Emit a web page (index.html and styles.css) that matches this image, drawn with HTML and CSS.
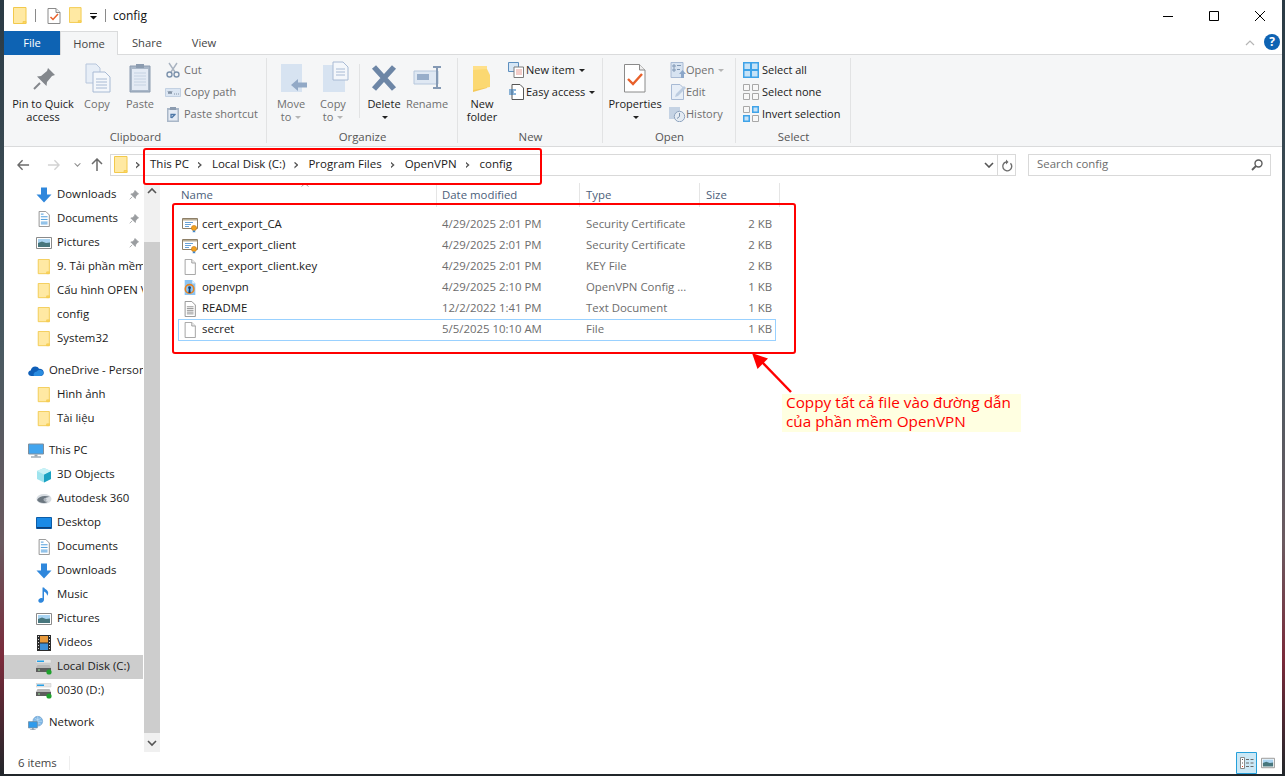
FILE: index.html
```html
<!DOCTYPE html>
<html lang="en">
<head>
<meta charset="utf-8">
<title>config</title>
<link rel="stylesheet" href="styles.css">
</head>
<body>
<svg class="defs" aria-hidden="true">
  <symbol id="folder" viewBox="0 0 14 18"><path d="M.5.5h12.500v16H.5z" fill="#ffe9a3" stroke="#f2c94c"/><path d="M10 14.500h3v2h-3z" fill="#ffd75e" stroke="#f2c94c" stroke-width=".8"/></symbol>
  <symbol id="doc" viewBox="0 0 14 18"><path d="M1.500.5H9l4 4v13H1.500z" fill="#fff" stroke="#9a9a9a"/><path d="M9 .5v4h4" fill="#eee" stroke="#9a9a9a"/></symbol>
  <symbol id="txt" viewBox="0 0 14 18"><path d="M1.500.5H9l4 4v13H1.500z" fill="#fff" stroke="#8a8a8a"/><path d="M3.500 6.500h7.500M3.500 8.500h7.500M3.500 10.500h7.500M3.500 12.500h7.500M3.500 14.500h7.500" stroke="#8a8a8a"/></symbol>
  <symbol id="docblue" viewBox="0 0 14 18"><path d="M1.500.5H9l4 4v13H1.500z" fill="#fff" stroke="#8a8a8a"/><path d="M3.500 3.500h3M3.500 6.500h7.500M3.500 9.500h7.500M3.500 12.500h7.500M3.500 14.500h7.500" stroke="#3a92d8"/></symbol>
  <symbol id="cert" viewBox="0 0 16 16"><path d="M.5 1.500h15v10H.5z" fill="#fff" stroke="#8d7f68"/><path d="M1 2h14v1.500H1z" fill="#b9ad95"/><path d="M3 5.500h8M3 7.500h6M3 9.500h4" stroke="#6aa2d6"/><circle cx="12" cy="11" r="2.600" fill="#f0a020" stroke="#c67a10" stroke-width=".6"/><path d="M10.800 13.500v2l1.200-.6 1.200.6v-2" fill="#3f86c9"/></symbol>
  <symbol id="vpn" viewBox="0 0 14 18"><path d="M1 0h8.500L13 4v13H1z" fill="#8cc4f2"/><path d="M9.500 0v4H13" fill="#e8f3fc"/><circle cx="6.500" cy="10" r="4.800" fill="none" stroke="#e8821e" stroke-width="1.800"/><circle cx="6.500" cy="8.700" r="1.600" fill="#17406e"/><path d="M5.700 9.500h1.600l.5 5H5.200z" fill="#17406e"/></symbol>
  <symbol id="dl" viewBox="0 0 16 16"><path d="M5 .5h6v7h4.500L8 15.500.5 7.500H5z" fill="#2f87dc"/></symbol>
  <symbol id="pic" viewBox="0 0 16 14"><path d="M.5 1.500h15v11H.5z" fill="#fff" stroke="#8a8a8a"/><path d="M2 3h12v4H2z" fill="#a9d4f2"/><path d="M2 7l4-1.500 4 1.500 4-.5V11H2z" fill="#47767d"/></symbol>
  <symbol id="pinicon" viewBox="0 0 10 10"><path d="M6 .5l3.500 3.500-1.200.6-1.700 2.200-.3 1.700L1.800 4l1.700-.3 2-1.700zM3.200 6.800L.7 9.300" fill="#9a9da0" stroke="#9a9da0" stroke-width=".8"/></symbol>
  <symbol id="cloud" viewBox="0 0 16 11"><path d="M3.500 10.500C1.500 10.500.2 9.300.2 7.700c0-1.500 1-2.600 2.500-2.800C3.300 2.600 5 1 7.200 1c1.700 0 3.100.9 3.800 2.300 2.500-.3 4.700 1.300 4.800 3.800.1 2-1.200 3.400-3.300 3.400z" fill="#0f5fb8"/><path d="M6 10.500c-1-1.800.2-4.300 2.800-4.500 1.400-1.700 4.700-2 6 .1.900 1.800-.3 4.400-2.500 4.400z" fill="#2a8ce0"/></symbol>
  <symbol id="pc" viewBox="0 0 16 15"><path d="M.5.500h15v10H.5z" fill="#42a5ee" stroke="#7e8f9e"/><path d="M6.500 11h3v2h-3z" fill="#9aa6b0"/><path d="M3 13.500h10" stroke="#9aa6b0" stroke-width="1.400"/></symbol>
  <symbol id="cube" viewBox="0 0 16 16"><path d="M8 1l7 3v8l-7 3.500L1 12V4z" fill="#9fe4ee"/><path d="M8 7.500V15.500L15 12V4z" fill="#1ba2c2"/><path d="M1 4l7 3.500L15 4 8 1z" fill="#c9f2f6"/></symbol>
  <symbol id="adsk" viewBox="0 0 16 12"><ellipse cx="8" cy="6" rx="7.500" ry="5" fill="#d8dde2"/><path d="M1 7c2-4 8-5 13-3-3 0-6 1-6 3 0 1.500 2 2 4 1.500-3 2.500-9 2-11-1.500z" fill="#6c7780"/><circle cx="9" cy="6.500" r="1.500" fill="#aab2ba"/></symbol>
  <symbol id="desk" viewBox="0 0 16 12"><path d="M.5.500h15v11H.5z" fill="#1a8ae6" stroke="#0c5da8"/><path d="M1 10h14v1.500H1z" fill="#0c3f78"/></symbol>
  <symbol id="note" viewBox="0 0 12 16"><path d="M4.500.5v10.800C3.800 11 3 11 2.300 11.300.7 12 0 13.300.5 14.500s2 1.600 3.500 1c1.300-.6 2-1.500 2-3V4.500c1.500.8 3 1.800 3.200 4.200 1.300-1.600 1.500-4-.5-5.700C7.300 2 6.300 1.200 6 .5z" fill="#2f87dc"/></symbol>
  <symbol id="film" viewBox="0 0 14 16"><path d="M0 0h14v16H0z" fill="#2b2b2b"/><path d="M3 1h8v6.500H3z" fill="#e89a3c"/><path d="M3 8.500h8V15H3z" fill="#3d8fd8"/><path d="M1 1h1v1H1zM1 4h1v1H1zM1 7h1v1H1zM1 10h1v1H1zM1 13h1v1H1zM12 1h1v1h-1zM12 4h1v1h-1zM12 7h1v1h-1zM12 10h1v1h-1zM12 13h1v1h-1z" fill="#ddd"/></symbol>
  <symbol id="disk" viewBox="0 0 16 16"><path d="M0 .5h15v3.500H0z" fill="#e8e8e8" stroke="#c4c4c4" stroke-width=".5"/><path d="M1 1.500h7v1.500H1z" fill="#26a0e6"/><path d="M1.500 6h12L15 9H0z" fill="#b8b8b8"/><path d="M0 9h15v4H0z" fill="#5d5d5d"/><path d="M2 10.500h2v1H2z" fill="#9adf9a"/><circle cx="13" cy="13" r="2.600" fill="#1fa02c"/></symbol>
  <symbol id="net" viewBox="0 0 18 16"><circle cx="11" cy="6" r="5.500" fill="#7fb7e6" stroke="#5f93c4" stroke-width=".6"/><path d="M11 .5v11M6 6h10M7.500 2.500c2 2 5 2 7 0M7.500 9.500c2-2 5-2 7 0" stroke="#dcecf8" stroke-width=".6" fill="none"/><path d="M.5 6.500h10v7H.5z" fill="#2e9bec" stroke="#6d8598" stroke-width=".8"/><path d="M4.500 13.500h2v1.500h-2zM2.500 15h6v1h-6z" fill="#94a4b2"/></symbol>
  <symbol id="check" viewBox="0 0 14 16"><path d="M1 .5h8l4 4v11H1z" fill="#fff" stroke="#8a8a8a"/><path d="M9 .5v4h4" fill="#eee" stroke="#8a8a8a"/><path d="M3.500 9l2.500 2.500 5-5.500" fill="none" stroke="#e8602a" stroke-width="1.500"/></symbol>
  <symbol id="search" viewBox="0 0 12 12"><circle cx="7.500" cy="4.500" r="3.500" fill="none" stroke="#5c5c5c" stroke-width="1.400"/><path d="M5 7L1 11" stroke="#5c5c5c" stroke-width="1.800"/></symbol>
</svg>

<main class="window">
  <header class="titlebar">
    <svg class="qa-folder"><use href="#folder"/></svg>
    <span class="qa-sep"></span>
    <svg class="qa-check"><use href="#check"/></svg>
    <svg class="qa-folder2"><use href="#folder"/></svg>
    <svg class="qa-drop" viewBox="0 0 7 8"><path d="M0 1h7v1H0zM0 4h7L3.500 7.500z" fill="#111"/></svg>
    <span class="qa-sep sep2"></span>
    <span class="title">config</span>
    <div class="winbtns">
      <svg class="winbtn" viewBox="0 0 46 16"><path d="M18 8.500h10" stroke="#000"/></svg>
      <svg class="winbtn" viewBox="0 0 46 16"><path d="M18.500 3.500h9v9h-9z" fill="none" stroke="#000"/></svg>
      <svg class="winbtn" viewBox="0 0 46 16"><path d="M18 3l10 10M28 3L18 13" stroke="#000"/></svg>
    </div>
  </header>

  <nav class="tabs">
    <span class="tab tab-file">File</span>
    <span class="tab tab-home">Home</span>
    <span class="tab tab-share">Share</span>
    <span class="tab tab-view">View</span>
    <svg class="collapse" viewBox="0 0 10 6"><path d="M1 5l4-4 4 4" fill="none" stroke="#b5b5b5" stroke-width="1.200"/></svg>
    <span class="help">?</span>
  </nav>

  <section class="ribbon">
    <div class="group g-clip">
      <div class="group-body">
        <div class="big w-pin">
          <svg class="bigicon" viewBox="0 0 32 32"><path d="M21 7l7 7-3 1-5 6-.5 4L10 15.500l4-.5 6-5z" fill="#83878c"/><path d="M13 22l-6 6" stroke="#83878c" stroke-width="2"/></svg>
          <span class="lbl on">Pin to Quick<br>access</span>
        </div>
        <div class="big w-copy">
          <svg class="bigicon" viewBox="0 0 32 32"><path d="M5 3h10l4 4v15H5z" fill="#e7eef7" stroke="#b7c6dc"/><path d="M12 11h12l5 5v15H12z" fill="#f4f7fb" stroke="#a8bad4"/><path d="M15 18h11M15 21h11M15 24h11M15 27h11" stroke="#a8bad4"/></svg>
          <span class="lbl">Copy</span>
        </div>
        <div class="big w-paste">
          <svg class="bigicon" viewBox="0 0 32 32"><path d="M6 5h20v26H6z" fill="#a9b7c8" stroke="#8c9cb0"/><path d="M8 8h16v21H8z" fill="#e4ebf5"/><path d="M12 3h8v4h-8z" fill="#8c9cb0"/><path d="M10 12h12M10 15h12M10 18h12M10 21h12M10 24h12" stroke="#c5d2e2"/></svg>
          <span class="lbl">Paste</span>
        </div>
        <div class="col">
          <div class="small"><svg class="smicon" viewBox="0 0 16 16"><path d="M4 1l6 9M12 1L6 10" stroke="#a9b3c0" stroke-width="1.400"/><circle cx="4.500" cy="12.500" r="2.500" fill="none" stroke="#7d93ad" stroke-width="1.400"/><circle cx="11.500" cy="12.500" r="2.500" fill="none" stroke="#7d93ad" stroke-width="1.400"/></svg><span>Cut</span></div>
          <div class="small"><svg class="smicon" viewBox="0 0 16 16"><path d="M.5 4.500h15v8H.5z" fill="#dbe6f3" stroke="#c3d1e2"/><path d="M3 7l1 3 1-3 1 3 1-3M9 10h1M11 10h1M13 10h1" stroke="#6f7f92" fill="none" stroke-width=".8"/></svg><span>Copy path</span></div>
          <div class="small"><svg class="smicon" viewBox="0 0 16 16"><path d="M2 2h12v14H2z" fill="#a9b7c8"/><path d="M3.500 4h9v10.500h-9z" fill="#e4ebf5"/><path d="M5 1h6v3H5z" fill="#8c9cb0"/><path d="M6 12V8.500h3.500M6.500 12l4-4" stroke="#4e78a8" stroke-width="1.300" fill="none"/></svg><span>Paste shortcut</span></div>
        </div>
      </div>
      <div class="group-label">Clipboard</div>
    </div>

    <div class="group g-org">
      <div class="group-body">
        <div class="big w-move">
          <svg class="bigicon" viewBox="0 0 32 32"><path d="M6 3h21v28H6z" fill="#d7e3f1"/><path d="M16 24l7-6v3.500h9v5h-9V30z" fill="#92a9c6"/></svg>
          <span class="lbl">Move<br>to <i class="caret off"></i></span>
        </div>
        <div class="big w-move">
          <svg class="bigicon" viewBox="0 0 32 32"><path d="M6 4h22v27H6z" fill="#d7e3f1"/><path d="M16 1h10l5 5v13H16z" fill="#f4f7fb" stroke="#a8bad4"/><path d="M19 8h9M19 11h9M19 14h9" stroke="#a8bad4"/></svg>
          <span class="lbl">Copy<br>to <i class="caret off"></i></span>
        </div>
        <span class="vsep"></span>
        <div class="big w-del">
          <svg class="bigicon" viewBox="0 0 32 32"><path d="M6 6l20 22M26 6L6 28" stroke="#6d86a6" stroke-width="5.500"/></svg>
          <span class="lbl on">Delete<br><i class="caret"></i></span>
        </div>
        <div class="big w-ren">
          <svg class="bigicon" viewBox="0 0 32 32"><path d="M3 10h24v13H3z" fill="#dfe8f3" stroke="#b6c7dc"/><path d="M6 13h12v6H6z" fill="#98aeca"/><path d="M22 6h8M22 27h8M26 6v21" stroke="#8499b4" stroke-width="2"/></svg>
          <span class="lbl">Rename</span>
        </div>
      </div>
      <div class="group-label">Organize</div>
    </div>

    <div class="group g-new">
      <div class="group-body">
        <div class="big w-nf">
          <svg class="bigicon" viewBox="0 0 32 32"><path d="M7 5h14v22l-14 4z" fill="#f4c95a"/><path d="M7 5h14v5H7z" fill="#ffe08a"/><path d="M7 9l14-1 3 6v12l-17 3z" fill="#fbd871"/></svg>
          <span class="lbl on">New<br>folder</span>
        </div>
        <div class="col">
          <div class="small on s-new"><svg class="smicon" viewBox="0 0 16 16"><path d="M.5.500h10v9H.5z" fill="#d6e6f5" stroke="#5d8fbf"/><path d="M6 5h9.500v10.500H6z" fill="#fff" stroke="#7a7a7a"/><path d="M8 8h6M8 10h6M8 12h6" stroke="#e0807a" stroke-width=".8"/></svg><span>New item <i class="caret"></i></span></div>
          <div class="small on s-new"><svg class="smicon" viewBox="0 0 16 16"><path d="M4 .5h8l3.500 3.500v11.500H4z" fill="#fff" stroke="#555"/><path d="M1 6h7M1 8h5M1 10h7" stroke="#1f6fb5"/></svg><span>Easy access <i class="caret"></i></span></div>
        </div>
      </div>
      <div class="group-label">New</div>
    </div>

    <div class="group g-open">
      <div class="group-body">
        <div class="big w-prop">
          <svg class="bigicon" viewBox="0 0 32 32"><path d="M5.500 3.500h15l5.500 5.500v22h-20.500z" fill="#fff" stroke="#8a8a8a"/><path d="M20.500 3.500V9H26" fill="#eee" stroke="#8a8a8a"/><path d="M9 18l5 5L23 13" fill="none" stroke="#e8602a" stroke-width="2.400"/></svg>
          <span class="lbl on">Properties<br><i class="caret"></i></span>
        </div>
        <div class="col">
          <div class="small s-open"><svg class="smicon" viewBox="0 0 16 16"><path d="M1 .5h12v15H1z" fill="#d7e3f1" stroke="#a8bad4"/><path d="M3 3h2v2H3zM3 7h2v2H3zM7 3.500h4M7 7.500h3" stroke="#8097b4" fill="none"/><path d="M11 16v-4H9l3.500-4 3.500 4h-2v4z" fill="#8ba6c8"/></svg><span>Open <i class="caret off"></i></span></div>
          <div class="small s-open"><svg class="smicon" viewBox="0 0 16 16"><path d="M1.500.5H10l3.500 3.500v11.500h-12z" fill="#e7eef7" stroke="#a8bad4"/><path d="M5 13l1-3 8-8 2 2-8 8z" fill="#bccce0"/></svg><span>Edit</span></div>
          <div class="small s-open s-hist"><svg class="smicon smw" viewBox="0 0 18 16"><path d="M1 1h11v12H1z" fill="#c5d3e4"/><circle cx="11.500" cy="10.500" r="5.200" fill="#e4ebf3" stroke="#8fa4bf"/><path d="M11.500 7v3.500L9 12.500" stroke="#7d93ad" fill="none"/></svg><span>History</span></div>
        </div>
      </div>
      <div class="group-label">Open</div>
    </div>

    <div class="group g-sel">
      <div class="group-body">
        <div class="col">
          <div class="small on s-sel"><svg class="smicon" viewBox="0 0 16 16"><path d="M0 0h16v16H0z" fill="#3fa3e8"/><path d="M1.500 1.500h5.500v5.500H1.500zM9 1.500h5.500v5.500H9zM1.500 9h5.500v5.500H1.500zM9 9h5.500v5.500H9z" fill="#c7e3f7"/></svg><span>Select all</span></div>
          <div class="small on s-sel"><svg class="smicon" viewBox="0 0 16 16"><path d="M.5.500h6v6h-6zM9.500.5h6v6h-6zM.5 9.500h6v6h-6zM9.500 9.500h6v6h-6z" fill="#f8f8f8" stroke="#a8a8a8"/></svg><span>Select none</span></div>
          <div class="small on s-sel"><svg class="smicon" viewBox="0 0 16 16"><path d="M.5.500h6v6h-6zM9.500 9.500h6v6h-6z" fill="#f8f8f8" stroke="#a8a8a8"/><path d="M9 0h7v7H9zM0 9h7v7H0z" fill="#3fa3e8"/><path d="M10.500 1.500h4v4h-4zM1.500 10.500h4v4h-4z" fill="#c7e3f7"/></svg><span>Invert selection</span></div>
        </div>
      </div>
      <div class="group-label">Select</div>
    </div>
  </section>

  <div class="addrrow">
    <div class="navbtns">
      <svg class="nb nb-back" viewBox="0 0 14 12"><path d="M1 6h12M6 1L1 6l5 5" fill="none" stroke="#6b6b6b" stroke-width="1.500"/></svg>
      <svg class="nb nb-fwd" viewBox="0 0 14 12"><path d="M1 6h12M8 1l5 5-5 5" fill="none" stroke="#d2d2d2" stroke-width="1.500"/></svg>
      <svg class="nb nb-down" viewBox="0 0 8 6"><path d="M.7 1L4 4.300 7.300 1" fill="none" stroke="#8b8b8b" stroke-width="1.200"/></svg>
      <svg class="nb nb-up" viewBox="0 0 12 14"><path d="M6 13V1M1 6l5-5 5 5" fill="none" stroke="#6b6b6b" stroke-width="1.500"/></svg>
    </div>
    <div class="addr">
      <svg class="addr-folder"><use href="#folder"/></svg>
      <span class="chev c0"></span>
      <span class="crumb">This PC</span><span class="chev"></span>
      <span class="crumb">Local Disk (C:)</span><span class="chev"></span>
      <span class="crumb">Program Files</span><span class="chev"></span>
      <span class="crumb">OpenVPN</span><span class="chev"></span>
      <span class="crumb">config</span>
      <svg class="addr-drop" viewBox="0 0 10 6"><path d="M1 1l4 4 4-4" fill="none" stroke="#555" stroke-width="1.600"/></svg>
      <span class="addr-sep"></span>
      <svg class="addr-ref" viewBox="0 0 12 13"><path d="M9.500 4.200A4.500 4.500 0 1 1 5 3" fill="none" stroke="#6d6d6d" stroke-width="1.400"/><path d="M5 .5v5L7.500 3z" fill="#6d6d6d"/></svg>
    </div>
    <div class="searchbox"><span>Search config</span><svg class="search-i"><use href="#search"/></svg></div>
  </div>

  <div class="content">
    <aside class="sidebar">
      <div class="nav kid"><svg class="ni"><use href="#dl"/></svg><span>Downloads</span><svg class="pin"><use href="#pinicon"/></svg></div>
      <div class="nav kid"><svg class="ni"><use href="#docblue"/></svg><span>Documents</span><svg class="pin"><use href="#pinicon"/></svg></div>
      <div class="nav kid"><svg class="ni"><use href="#pic"/></svg><span>Pictures</span><svg class="pin"><use href="#pinicon"/></svg></div>
      <div class="nav kid"><svg class="ni"><use href="#folder"/></svg><span>9. Tải phần mềm OpenVPN</span></div>
      <div class="nav kid"><svg class="ni"><use href="#folder"/></svg><span>Cấu hình OPEN VPN</span></div>
      <div class="nav kid"><svg class="ni"><use href="#folder"/></svg><span>config</span></div>
      <div class="nav kid"><svg class="ni"><use href="#folder"/></svg><span>System32</span></div>
      <div class="nav top gap"><svg class="ni"><use href="#cloud"/></svg><span>OneDrive - Personal</span></div>
      <div class="nav kid"><svg class="ni"><use href="#folder"/></svg><span>Hình ảnh</span></div>
      <div class="nav kid"><svg class="ni"><use href="#folder"/></svg><span>Tài liệu</span></div>
      <div class="nav top gap"><svg class="ni"><use href="#pc"/></svg><span>This PC</span></div>
      <div class="nav kid"><svg class="ni"><use href="#cube"/></svg><span>3D Objects</span></div>
      <div class="nav kid"><svg class="ni"><use href="#adsk"/></svg><span>Autodesk 360</span></div>
      <div class="nav kid"><svg class="ni"><use href="#desk"/></svg><span>Desktop</span></div>
      <div class="nav kid"><svg class="ni"><use href="#docblue"/></svg><span>Documents</span></div>
      <div class="nav kid"><svg class="ni"><use href="#dl"/></svg><span>Downloads</span></div>
      <div class="nav kid"><svg class="ni"><use href="#note"/></svg><span>Music</span></div>
      <div class="nav kid"><svg class="ni"><use href="#pic"/></svg><span>Pictures</span></div>
      <div class="nav kid"><svg class="ni"><use href="#film"/></svg><span>Videos</span></div>
      <div class="nav kid selected"><svg class="ni"><use href="#disk"/></svg><span>Local Disk (C:)</span></div>
      <div class="nav kid"><svg class="ni"><use href="#disk"/></svg><span>0030 (D:)</span></div>
      <div class="nav top gap"><svg class="ni"><use href="#net"/></svg><span>Network</span></div>
    </aside>
    <div class="scrollbar">
      <svg class="sb-arrow" viewBox="0 0 16 17"><path d="M4 10l4-4 4 4" fill="none" stroke="#555" stroke-width="1.600"/></svg>
      <div class="sb-space"></div>
      <div class="sb-thumb"></div>
      <svg class="sb-arrow sb-down" viewBox="0 0 16 17"><path d="M4 6l4 4 4-4" fill="none" stroke="#555" stroke-width="1.600"/></svg>
    </div>
    <div class="files">
      <div class="colhead">
        <span class="ch c-name">Name<svg class="sort" viewBox="0 0 8 4"><path d="M.5 3.500L4 .5l3.500 3" fill="none" stroke="#a0a0a0"/></svg></span>
        <span class="ch c-date">Date modified</span>
        <span class="ch c-type">Type</span>
        <span class="ch c-size">Size</span>
      </div>
      <div class="rows">
        <div class="row"><svg class="fi"><use href="#cert"/></svg><span class="fname">cert_export_CA</span><span>4/29/2025 2:01 PM</span><span>Security Certificate</span><span class="sz">2 KB</span></div>
        <div class="row"><svg class="fi"><use href="#cert"/></svg><span class="fname">cert_export_client</span><span>4/29/2025 2:01 PM</span><span>Security Certificate</span><span class="sz">2 KB</span></div>
        <div class="row"><svg class="fi"><use href="#doc"/></svg><span class="fname">cert_export_client.key</span><span>4/29/2025 2:01 PM</span><span>KEY File</span><span class="sz">2 KB</span></div>
        <div class="row"><svg class="fi"><use href="#vpn"/></svg><span class="fname">openvpn</span><span>4/29/2025 2:10 PM</span><span>OpenVPN Config ...</span><span class="sz">1 KB</span></div>
        <div class="row"><svg class="fi"><use href="#txt"/></svg><span class="fname">README</span><span>12/2/2022 1:41 PM</span><span>Text Document</span><span class="sz">1 KB</span></div>
        <div class="row row-focus"><svg class="fi"><use href="#doc"/></svg><span class="fname">secret</span><span>5/5/2025 10:10 AM</span><span>File</span><span class="sz">1 KB</span></div>
      </div>
    </div>
  </div>

  <footer class="status">
    <span class="count">6 items</span>
    <span class="stat-sep"></span>
    <div class="views">
      <svg class="view view-on" viewBox="0 0 21 22"><path d="M.5.500h20v21H.5z" fill="#cbe8f6" stroke="#26a0da"/><path d="M4.500 5.500h4v11h-4z" fill="#fff" stroke="#8a8a8a"/><path d="M10 7.500h3M14.500 7.500h3M10 11h3M14.500 11h3M10 14.500h3M14.500 14.500h3" stroke="#6b6b6b"/><path d="M6 7h1v1H6zM6 10.500h1v1H6z" fill="#555"/><path d="M6 14h1v1H6z" fill="#d9482b"/></svg>
      <svg class="view view-off"><use href="#pic"/></svg>
    </div>
  </footer>
</main>

<div class="mark mark-addr"></div>
<div class="mark mark-files"></div>
<svg class="arrow" viewBox="0 0 44 44"><path d="M40 40L10 9" stroke="#f00" stroke-width="2.400"/><path d="M1 1l16 5.500L6.500 17z" fill="#f00"/></svg>
<div class="callout"><p class="callout-text">Coppy tất cả file vào đường dẫn<br>của phần mềm OpenVPN</p></div>
</body>
</html>
```
FILE: styles.css
```css
* { box-sizing: border-box; }
html, body { margin: 0; height: 776px; overflow: hidden; }
body {
  width: 1285px;
  position: relative;
  padding: 0 3px 2px 4px;
  background: linear-gradient(180deg, #2a3a44 0%, #4a5a62 45%, #6b5a60 70%, #7a2a3a 85%, #20262a 100%);
  font: 11.4px/16px "Open Sans", "Noto Sans", sans-serif;
  color: #1a1a1a;
}
.defs { position: absolute; width: 0; height: 0; }
.window {
  width: 1278px;
  height: 774px;
  background: #fff;
  display: flex;
  flex-direction: column;
  overflow: hidden;
}

/* title bar */
.titlebar { height: 31px; display: flex; align-items: center; flex: none; }
.qa-folder { width: 14px; height: 18px; margin-left: 9px; }
.qa-sep { width: 1px; height: 13px; background: #8a8a8a; margin-left: 8px; }
.qa-check { width: 14px; height: 16px; margin-left: 11px; }
.qa-folder2 { width: 13px; height: 17px; margin-left: 8px; }
.qa-drop { width: 7px; height: 8px; margin-left: 8px; }
.sep2 { margin-left: 8px; }
.title { margin-left: 7px; font-size: 12px; color: #111; }
.winbtns { margin-left: auto; display: flex; margin-right: -1px; }
.winbtn { width: 46px; height: 16px; flex: none; }

/* tabs */
.tabs { height: 24px; flex: none; display: flex; align-items: stretch; border-bottom: 1px solid #dadbdc; position: relative; }
.tab { line-height: 24px; color: #444; text-align: center; font-size: 11.2px; }
.tab-file { width: 56px; background: #0e63b3; color: #fff; margin-bottom: -1px; }
.tab-home { width: 58px; border: 1px solid #dadbdc; border-bottom: 0; background: #f5f6f7; height: 24px; }
.tab-share { width: 58px; }
.tab-view { width: 56px; }
.collapse { width: 10px; height: 6px; margin: 9px 0 0 auto; }
.help {
  width: 16px; height: 16px; margin: 3px 2px 0 9px;
  border-radius: 50%; background: #0e63b3; color: #fff;
  font: bold 12px/16px "Open Sans", sans-serif; text-align: center;
}

/* ribbon */
.ribbon { height: 92px; flex: none; display: flex; background: #f5f6f7; border-bottom: 1px solid #dadbdc; font-size: 11px; }
.group { display: flex; flex-direction: column; height: 91px; padding-top: 6px; position: relative; }
.group::after { content: ""; position: absolute; right: 0; top: 3px; bottom: 3px; width: 1px; background: #e2e3e4; }
.g-clip { width: 263px; padding-left: 5px; }
.g-org { width: 191px; padding-left: 3px; }
.g-new { width: 145px; }
.g-open { width: 133px; }
.g-sel { width: 115px; padding-left: 5px; }
.group-body { flex: 1; display: flex; min-height: 0; }
.group-label { height: 16px; line-height: 15px; margin-bottom: 1px; text-align: center; color: #555; font-size: 11.4px; }
.g-clip .group-label { margin-left: -5px; }
.g-org .group-label { margin-left: -3px; }
.g-sel .group-label { margin-left: -5px; }

.big { display: flex; flex-direction: column; align-items: center; text-align: center; }
.bigicon { width: 32px; height: 32px; flex: none; }
.lbl { margin-top: 4px; line-height: 13px; color: #6f6f6f; white-space: nowrap; }
.lbl.on { color: #1a1a1a; }
.w-pin { width: 68px; }
.w-copy { width: 40px; }
.w-paste { width: 46px; }
.w-move { width: 42px; }
.w-del { width: 46px; }
.w-ren { width: 40px; }
.w-nf { width: 48px; }
.w-prop { width: 64px; }
.vsep { width: 1px; height: 54px; margin: 3px 1px 0 5px; background: #e2e3e4; }

.col { display: flex; flex-direction: column; margin-top: -2px; }
.small { height: 22px; display: flex; align-items: center; color: #6f6f6f; white-space: nowrap; }
.small.on { color: #1a1a1a; }
.smicon { width: 16px; height: 16px; margin: 0 3px 0 2px; flex: none; }
.s-new .smicon { margin: 0 2px 0 2px; }
.s-open .smicon { margin: 0 0 0 3px; }
.s-hist .smicon { margin-left: 1px; width: 18px; }
.s-sel .smicon { margin: 0 3px 0 2px; }
.caret { display: inline-block; width: 0; height: 0; vertical-align: 2px; margin-left: 1px; border: 3.500px solid transparent; border-top: 3.500px solid #222; border-bottom: 0; }
.caret.off { border-top-color: #b5b5b5; }

/* address */
.addrrow { height: 36px; flex: none; display: flex; align-items: center; }
.navbtns { width: 106px; flex: none; height: 22px; display: flex; align-items: center; }
.nb { flex: none; }
.nb-back { width: 13px; height: 12px; margin-left: 13px; }
.nb-fwd { width: 13px; height: 12px; margin-left: 17px; }
.nb-down { width: 7px; height: 6px; margin-left: 14px; }
.nb-up { width: 12px; height: 14px; margin-left: 10px; }
.addr { width: 906px; height: 22px; flex: none; border: 1px solid #d9d9d9; display: flex; align-items: center; }
.addr-folder { width: 14px; height: 18px; margin-left: 3px; flex: none; }
.chev { width: 4px; height: 7px; flex: none; background: #555; clip-path: polygon(0 0, 100% 50%, 0 100%, 0 75%, 50% 50%, 0 25%); }
.c0 { margin-left: 8px; }
.crumb { flex: none; margin: 0 9px 2px 10px; color: #1a1a1a; font-size: 11.5px; }
.addr-drop { width: 10px; height: 6px; margin-left: auto; }
.addr-sep { width: 1px; height: 20px; background: #d9d9d9; margin-left: 3px; }
.addr-ref { width: 12px; height: 13px; margin: 0 2px 0 3px; }
.searchbox { width: 243px; height: 22px; margin-left: 12px; flex: none; border: 1px solid #d9d9d9; display: flex; align-items: center; justify-content: space-between; padding: 0 7px 0 8px; color: #6d6d6d; }
.searchbox span { margin-bottom: 2px; }
.search-i { width: 12px; height: 12px; }

/* content */
.content { flex: 1; display: flex; min-height: 0; }
.sidebar { width: 140px; flex: none; overflow: hidden; }
.nav { height: 24px; display: flex; align-items: center; white-space: nowrap; position: relative; overflow: hidden; color: #1a1a1a; margin-right: 1px; }
.nav span { margin-bottom: 2px; }
.gap { margin-top: 8px; }
.ni { width: 16px; height: 16px; flex: none; }
.kid .ni { margin: 0 5px 0 32px; }
.top .ni { margin: 0 5px 0 24px; }
.selected { background: #cdcdcd; }
.pin { position: absolute; left: 125px; top: 7px; width: 10px; height: 10px; }
.scrollbar { width: 16px; flex: none; background: #f0f0f0; display: flex; flex-direction: column; }
.sb-arrow { width: 16px; height: 17px; flex: none; }
.sb-space { height: 42px; flex: none; }
.sb-thumb { flex: 1; background: #cdcdcd; }
.sb-down { margin-top: 2px; }

.files { flex: 1; min-width: 0; }
.colhead { height: 24px; margin-left: 15px; display: flex; color: #4c607a; width: 605px; }
.ch { line-height: 24px; border-right: 1px solid #e5e5e5; padding-left: 6px; flex: none; }
.c-name { width: 262px; position: relative; }
.sort { position: absolute; left: 126px; top: 0; width: 8px; height: 4px; }
.c-date { width: 143px; padding-left: 5px; }
.c-type { width: 120px; }
.c-size { width: 80px; }
.rows { margin: 7px 0 0 18px; width: 598px; }
.row { height: 21px; display: grid; grid-template-columns: 24px 240px 144px 120px 66px; align-items: center; color: #6d6d6d; }
.row span { margin-bottom: 1px; }
.fi { width: 16px; height: 16px; margin-left: 4px; }
.fname { color: #1a1a1a; }
.sz { text-align: right; }
.row-focus { outline: 1px solid #99d1ff; outline-offset: -1px; height: 22px; }
.row-focus span { margin-bottom: 2px; }

/* status */
.status { height: 22px; flex: none; display: flex; align-items: center; color: #444; }
.count { margin: 0 0 0 14px; }
.stat-sep { width: 1px; height: 14px; background: #eee; margin-left: 12px; }
.views { margin-left: auto; display: flex; align-items: center; margin-right: 7px; }
.view-on { width: 21px; height: 22px; }
.view-off { width: 14px; height: 12px; margin-left: 4px; }

/* annotations drawn over the window */
.mark { position: absolute; border: 2px solid #f00; border-radius: 3px; }
.mark-addr { left: 143px; top: 148px; width: 399px; height: 37px; }
.mark-files { left: 172px; top: 203px; width: 624px; height: 151px; }
.arrow { position: absolute; left: 751px; top: 352px; width: 44px; height: 44px; }
.callout {
  position: absolute; left: 782px; top: 394px; width: 239px; height: 38px;
  padding: 0 0 0 4px; background: #ffffe1; color: #f00;
  font: 15.3px/19px "Open Sans", "Noto Sans", sans-serif;
  white-space: nowrap;
}
.callout-text { margin: -1px 0 0; }
```
